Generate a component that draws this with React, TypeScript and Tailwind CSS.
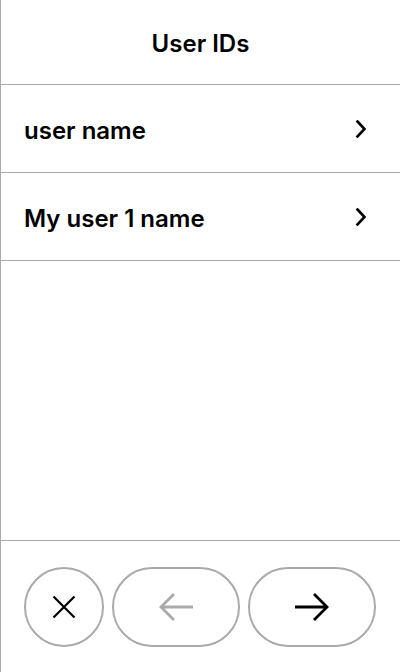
import React from "react";

const users = ["user name", "My user 1 name"];

function Chevron() {
  return (
    <svg width="12" height="18" viewBox="0 0 12 18" fill="none" className="shrink-0">
      <path d="M2.5 1.5 L9.5 9 L2.5 16.5" stroke="#000" strokeWidth="2.6" strokeLinecap="square" strokeLinejoin="miter" />
    </svg>
  );
}

function Arrow({ dir, color }: { dir: "left" | "right"; color: string }) {
  const d = dir === "left" ? "M2 14 H34 M15 1 L2 14 L15 27" : "M0 14 H32 M19 1 L32 14 L19 27";
  return (
    <svg width="34" height="28" viewBox="0 0 34 28" fill="none">
      <path d={d} stroke={color} strokeWidth="2.8" />
    </svg>
  );
}

export default function App() {
  return (
    <div
      className="flex h-[672px] w-[400px] flex-col border-l border-[#aaaaaa] bg-white text-black"
      style={{ fontFamily: "Inter, 'Noto Sans', sans-serif" }}
    >
      <div className="flex h-[85px] shrink-0 items-center justify-center border-b border-[#aaaaaa] pt-[3px]">
        <h1 className="text-[24px] font-semibold leading-none">User IDs</h1>
      </div>
      {users.map((u) => (
        <div key={u} className="flex h-[88px] shrink-0 items-center border-b border-[#aaaaaa] pl-[23px] pr-[33px]">
          <span className="flex-1 pt-[5px] text-[24px] font-semibold leading-none">{u}</span>
          <Chevron />
        </div>
      ))}
      <div className="flex-1" />
      <div className="flex h-[132px] shrink-0 items-center gap-[8px] border-t border-[#aaaaaa] pl-[23px] pr-[24px]">
        <button className="flex h-[80px] w-[80px] items-center justify-center rounded-full border-2 border-[#aaaaaa]">
          <svg width="24" height="24" viewBox="0 0 24 24" fill="none">
            <path d="M1.5 1.5 L22.5 22.5 M22.5 1.5 L1.5 22.5" stroke="#000" strokeWidth="2.2" />
          </svg>
        </button>
        <button className="flex h-[80px] w-[128px] items-center justify-center rounded-full border-2 border-[#aaaaaa]">
          <Arrow dir="left" color="#aaaaaa" />
        </button>
        <button className="flex h-[80px] w-[128px] items-center justify-center rounded-full border-2 border-[#aaaaaa]">
          <Arrow dir="right" color="#000000" />
        </button>
      </div>
    </div>
  );
}
